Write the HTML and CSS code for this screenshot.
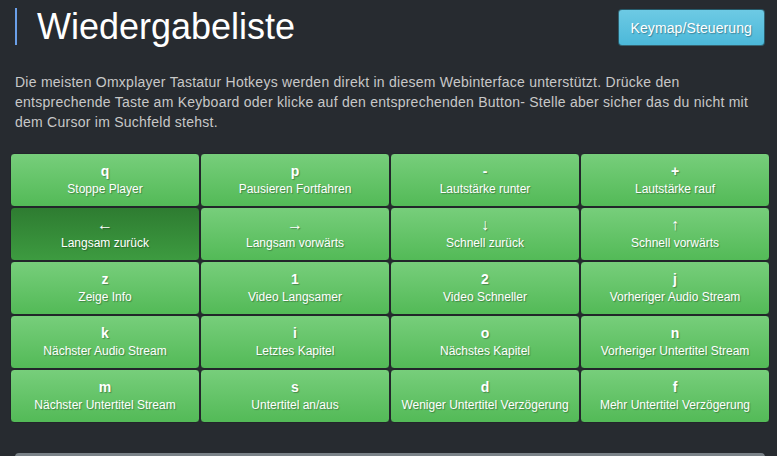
FILE: index.html
```html
<!DOCTYPE html>
<html lang="de">
<head>
<meta charset="utf-8">
<title>Wiedergabeliste</title>
<link rel="stylesheet" href="styles.css">
</head>
<body>
<div class="page">
  <div class="header">
    <h1 class="title">Wiedergabeliste</h1>
    <button class="btn-info">Keymap/Steuerung</button>
  </div>
  <p class="intro">Die meisten Omxplayer Tastatur Hotkeys werden direkt in diesem Webinterface unterstützt. Drücke den entsprechende Taste am Keyboard oder klicke auf den entsprechenden Button- Stelle aber sicher das du nicht mit dem Cursor im Suchfeld stehst.</p>
  <div class="keys">
    <button class="key"><span class="k">q</span><span class="l">Stoppe Player</span></button>
    <button class="key"><span class="k">p</span><span class="l">Pausieren Fortfahren</span></button>
    <button class="key"><span class="k">-</span><span class="l">Lautstärke runter</span></button>
    <button class="key"><span class="k">+</span><span class="l">Lautstärke rauf</span></button>
    <button class="key active"><span class="k arrow">←</span><span class="l">Langsam zurück</span></button>
    <button class="key"><span class="k arrow">→</span><span class="l">Langsam vorwärts</span></button>
    <button class="key"><span class="k arrow">↓</span><span class="l">Schnell zurück</span></button>
    <button class="key"><span class="k arrow">↑</span><span class="l">Schnell vorwärts</span></button>
    <button class="key"><span class="k">z</span><span class="l">Zeige Info</span></button>
    <button class="key"><span class="k">1</span><span class="l">Video Langsamer</span></button>
    <button class="key"><span class="k">2</span><span class="l">Video Schneller</span></button>
    <button class="key"><span class="k">j</span><span class="l">Vorheriger Audio Stream</span></button>
    <button class="key"><span class="k">k</span><span class="l">Nächster Audio Stream</span></button>
    <button class="key"><span class="k">i</span><span class="l">Letztes Kapitel</span></button>
    <button class="key"><span class="k">o</span><span class="l">Nächstes Kapitel</span></button>
    <button class="key"><span class="k">n</span><span class="l">Vorheriger Untertitel Stream</span></button>
    <button class="key"><span class="k">m</span><span class="l">Nächster Untertitel Stream</span></button>
    <button class="key"><span class="k">s</span><span class="l">Untertitel an/aus</span></button>
    <button class="key"><span class="k">d</span><span class="l">Weniger Untertitel Verzögerung</span></button>
    <button class="key"><span class="k">f</span><span class="l">Mehr Untertitel Verzögerung</span></button>
  </div>
  <div class="bottom-bar"></div>
</div>
</body>
</html>
```

FILE: styles.css
```css
html, body {
  margin: 0;
  padding: 0;
  background: #272b30;
  height: 100%;
  overflow: hidden;
}
body {
  font-family: "Liberation Sans", Arial, sans-serif;
  color: #c8c8c8;
}
.page {
  padding-top: 8px;
}
.header {
  display: flex;
  justify-content: space-between;
  align-items: flex-start;
  margin: 0 12px 0 15px;
}
.title {
  margin: 0;
  border-left: 2px solid #6a9fe8;
  padding-left: 20px;
  font-size: 36px;
  font-weight: normal;
  line-height: 37px;
  height: 37px;
  color: #fff;
}
.btn-info {
  margin-top: 1px;
  height: 37px;
  padding: 0 12px;
  font-family: "Liberation Sans", Arial, sans-serif;
  font-size: 14px;
  letter-spacing: 0.1px;
  color: #fff;
  text-shadow: 1px 1px 1px rgba(0,0,0,0.3);
  background: linear-gradient(#6dcae4, #4cb8d9);
  border: 1px solid rgba(0,0,0,0.5);
  border-radius: 4px;
}
.intro {
  margin: 26px 15px 0 15px;
  font-size: 14px;
  line-height: 20px;
  letter-spacing: 0.25px;
}
.keys {
  margin: 21px 7px 0 10px;
  display: grid;
  grid-template-columns: repeat(4, 190px);
  grid-auto-rows: 54px;
}
.key {
  display: flex;
  flex-direction: column;
  align-items: center;
  justify-content: center;
  padding: 0;
  margin: 0;
  border: 1px solid #22262a;
  border-radius: 4px;
  background: linear-gradient(#77ce7b, #53ba57);
  color: #fff;
  font-family: "Liberation Sans", Arial, sans-serif;
  text-shadow: 1px 1px 1px rgba(0,0,0,0.3);
}
.key.active {
  background: linear-gradient(#2e7c31, #3d9b40);
}
.k {
  font-size: 14px;
  font-weight: bold;
  line-height: 18px;
}
.k.arrow {
  font-weight: normal;
  font-size: 16px;
}
.l {
  font-size: 12px;
  line-height: 18px;
}
.bottom-bar {
  margin: 30px 12px 0 15px;
  height: 40px;
  background: #7a8288;
  border-radius: 4px 4px 0 0;
}
```
